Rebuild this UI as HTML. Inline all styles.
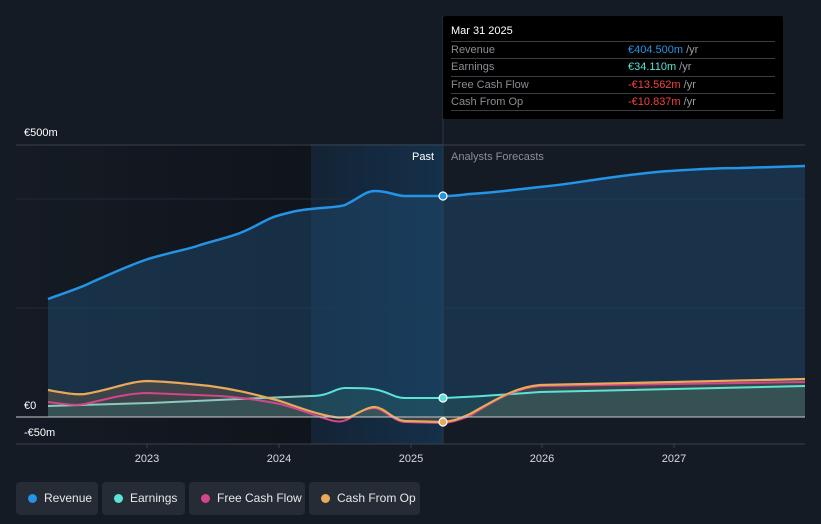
<!DOCTYPE html>
<html><head><meta charset="utf-8"><style>
body{margin:0;background:#151b24;width:821px;height:524px;overflow:hidden;font-family:"Liberation Sans",sans-serif;}
.tip{position:absolute;left:443px;top:16px;width:340px;height:103px;background:#000;border-radius:2px}
.tip .t{position:absolute;left:8px;top:9px;color:#fff;font-size:11px}
.row{position:absolute;left:8px;width:324px;height:17px;border-top:1px solid #3a3d42;font-size:11px;color:#8a8d92;line-height:17px}
.row .v{position:absolute;left:177px}
.row .u{color:#9a9da2}
.leg{position:absolute;top:482px;height:33px;background:#262c36;border-radius:4px;color:#e6e8ea;font-size:12px;line-height:33px}
.leg i{position:absolute;left:12px;top:12px;width:9px;height:9px;border-radius:50%}
.leg span{position:absolute;left:28px}
</style></head><body>
<svg width="821" height="524" style="position:absolute;left:0;top:0">
<defs>
<linearGradient id="pd" x1="0" x2="1"><stop offset="0" stop-color="#151b24"/><stop offset="1" stop-color="#10141b"/></linearGradient>
<linearGradient id="hl" x1="0" x2="1"><stop offset="0" stop-color="#142335"/><stop offset="1" stop-color="#15304a"/></linearGradient>
</defs>
<rect x="16" y="144" width="295" height="300" fill="url(#pd)"/>
<rect x="311" y="144" width="132" height="300" fill="url(#hl)"/>
<line x1="16" y1="145" x2="805" y2="145" stroke="#3b414b"/>
<line x1="16" y1="199" x2="805" y2="199" stroke="#232a34"/>
<line x1="16" y1="308" x2="805" y2="308" stroke="#232a34"/>
<line x1="16" y1="444" x2="805" y2="444" stroke="#3b414b"/>
<line x1="443" y1="16" x2="443" y2="444" stroke="#2c3a4a"/>
<path d="M48,299 C70,291 80,288 90,283 C115,272 130,265 148,259 C175,251 190,249 200,245 C220,239 230,237 240,233 C260,225 265,219 280,215 C295,211 300,210 311,209 C330,207 340,207 345,205 C360,198 365,191 375,191 C390,191 395,196 405,196 L443,196 C455,196 460,195 470,194 C500,192 520,189 540,187 C570,184 585,181 600,179 C630,175 650,172 670,171 C700,169 720,168 740,168 L805,166 L805,417 L48,417 Z" fill="#1e4a6e" fill-opacity="0.5"/>
<path d="M48,299 C70,291 80,288 90,283 C115,272 130,265 148,259 C175,251 190,249 200,245 C220,239 230,237 240,233 C260,225 265,219 280,215 C295,211 300,210 311,209 C330,207 340,207 345,205 C360,198 365,191 375,191 C390,191 395,196 405,196 L443,196 C455,196 460,195 470,194 C500,192 520,189 540,187 C570,184 585,181 600,179 C630,175 650,172 670,171 C700,169 720,168 740,168 L805,166" fill="none" stroke="#2394e6" stroke-width="2.5"/>
<path d="M48,390 C65,393 75,395 85,394 C110,390 130,381 148,381 C175,382 190,384 210,386 C240,390 260,396 280,401 C295,406 305,410 320,414 C335,418 340,418 350,417 C360,412 368,407 375,407 C385,408 393,420 405,421 L443,422 C455,421 460,418 470,414 C495,400 515,387 540,385 L805,379 L805,417 L48,417 Z" fill="#6b5b4a" fill-opacity="0.45"/>
<path d="M48,406 L150,403 L240,399 L311,396 C330,396 335,388 345,388 C360,388 370,388 378,390 C390,393 395,398 405,398 L443,398 C470,397 500,395 540,392 L805,386 L805,417 L48,417Z" fill="#2a6a6a" fill-opacity="0.35"/>
<path d="M48,406 L150,403 L240,399 L311,396" fill="none" stroke="#8ac9bb" stroke-width="2" />
<path d="M311,396 C330,396 335,388 345,388 C360,388 370,388 378,390 C390,393 395,398 405,398 L443,398 C470,397 500,395 540,392 L805,386" fill="none" stroke="#5be3d6" stroke-width="2" />
<path d="M48,402 C65,404 75,406 85,404 C110,398 130,393 148,393 C175,394 200,395 220,396 C245,398 265,401 280,404 C300,409 315,416 330,420 C340,423 345,421 350,418 C360,411 368,408 375,408 C386,410 393,421 405,422 L443,423 C455,422 460,419 470,416 C495,400 515,388 540,386 L805,382" fill="none" stroke="#d2468a" stroke-width="2"/>
<path d="M48,390 C65,393 75,395 85,394 C110,390 130,381 148,381 C175,382 190,384 210,386 C240,390 260,396 280,401 C295,406 305,410 320,414 C335,418 340,418 350,417 C360,412 368,407 375,407 C385,408 393,420 405,421 L443,422 C455,421 460,418 470,414 C495,400 515,387 540,385 L805,379" fill="none" stroke="#e8a95a" stroke-width="2.2"/>
<line x1="16" y1="417" x2="805" y2="417" stroke="#c9ccd0" stroke-width="1"/>
<circle cx="443" cy="196" r="4" fill="#2394e6" stroke="#fff" stroke-width="1.2"/>
<circle cx="443" cy="398" r="4" fill="#5be3d6" stroke="#fff" stroke-width="1.2"/>
<circle cx="443" cy="422" r="4" fill="#e8a95a" stroke="#fff" stroke-width="1.2"/>
<g font-family="Liberation Sans,sans-serif" font-size="11" fill="#fff">
<text x="24" y="136">€500m</text>
<text x="24" y="409">€0</text>
<text x="24" y="436">-€50m</text>
<text x="434" y="160" text-anchor="end">Past</text>
<text x="451" y="160" fill="#8a8f96">Analysts Forecasts</text>
<text x="147" y="462" text-anchor="middle" fill="#d8dadd">2023</text>
<text x="279" y="462" text-anchor="middle" fill="#d8dadd">2024</text>
<text x="411" y="462" text-anchor="middle" fill="#d8dadd">2025</text>
<text x="542" y="462" text-anchor="middle" fill="#d8dadd">2026</text>
<text x="674" y="462" text-anchor="middle" fill="#d8dadd">2027</text>
</g>
<g stroke="#3b414b"><line x1="147" y1="444" x2="147" y2="448"/><line x1="279" y1="444" x2="279" y2="448"/><line x1="411" y1="444" x2="411" y2="448"/><line x1="542" y1="444" x2="542" y2="448"/><line x1="674" y1="444" x2="674" y2="448"/></g>
</svg>
<div class="tip">
<div class="t">Mar 31 2025</div>
<div class="row" style="top:25px">Revenue<span class="v"><span style="color:#2394e6">€404.500m</span> <span class="u">/yr</span></span></div>
<div class="row" style="top:42px">Earnings<span class="v"><span style="color:#5be3d6">€34.110m</span> <span class="u">/yr</span></span></div>
<div class="row" style="top:60px">Free Cash Flow<span class="v"><span style="color:#f0443f">-€13.562m</span> <span class="u">/yr</span></span></div>
<div class="row" style="top:77px">Cash From Op<span class="v"><span style="color:#f0443f">-€10.837m</span> <span class="u">/yr</span></span></div>
<div class="row" style="top:94px;height:0"></div>
</div>
<div class="leg" style="left:16px;width:82px"><i style="background:#2394e6"></i><span>Revenue</span></div>
<div class="leg" style="left:102px;width:83px"><i style="background:#5be3d6"></i><span>Earnings</span></div>
<div class="leg" style="left:189px;width:116px"><i style="background:#d2468a"></i><span>Free Cash Flow</span></div>
<div class="leg" style="left:309px;width:111px"><i style="background:#e8a95a"></i><span>Cash From Op</span></div>
</body></html>
